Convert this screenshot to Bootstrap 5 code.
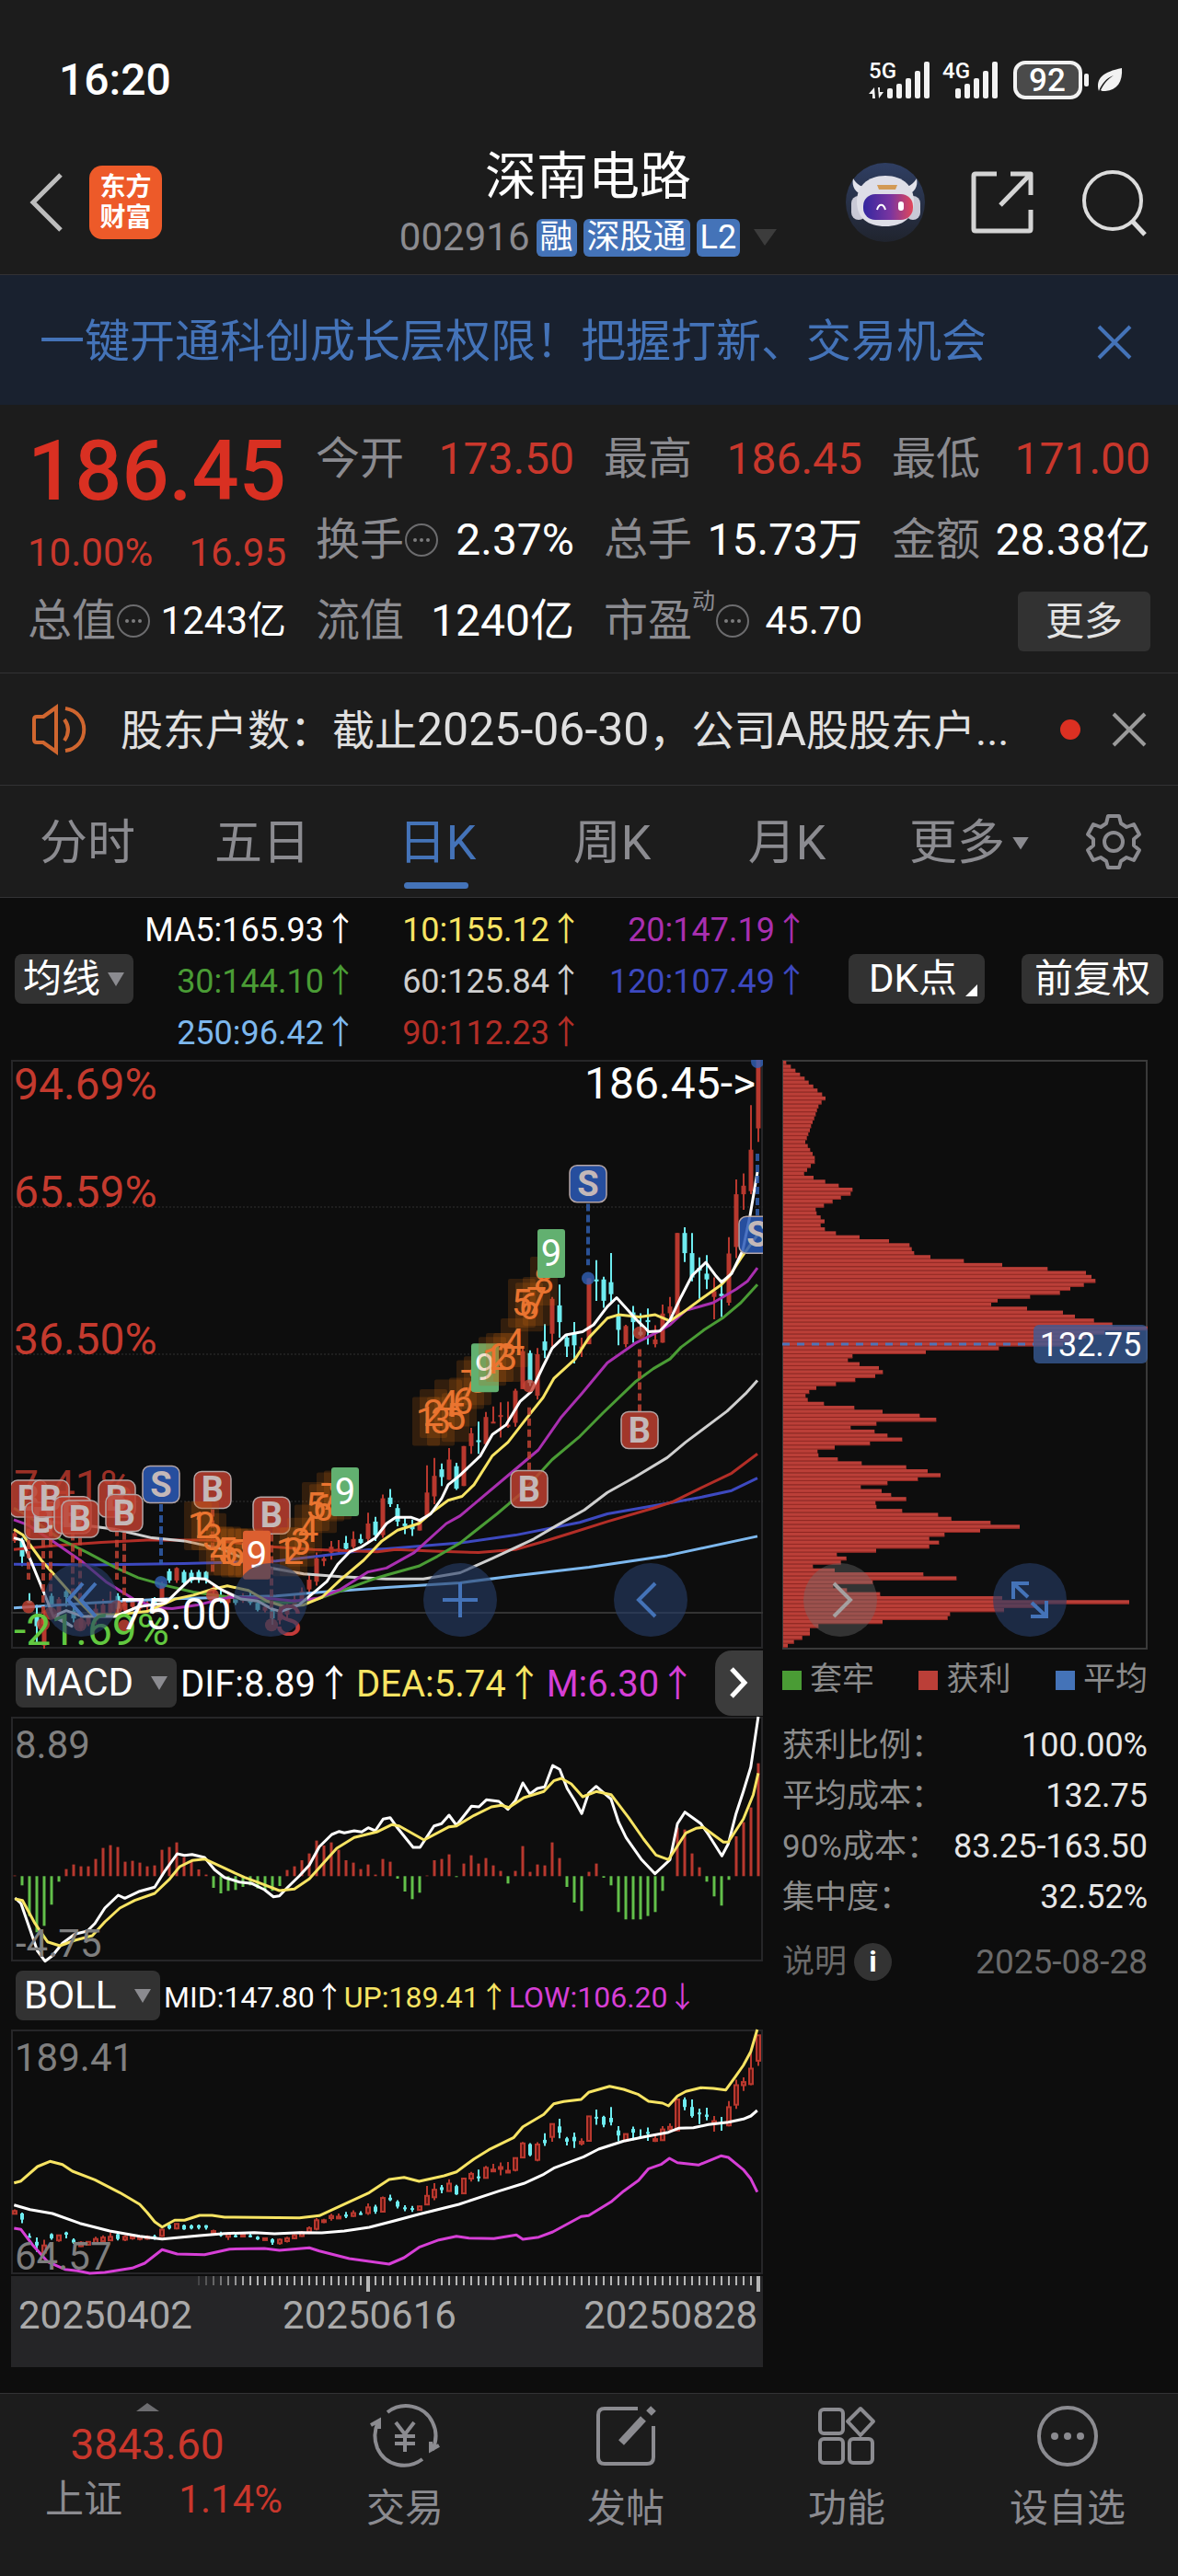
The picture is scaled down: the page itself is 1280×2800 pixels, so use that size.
<!DOCTYPE html>
<html lang="zh-CN">
<head>
<meta charset="utf-8">
<meta name="viewport" content="width=device-width, initial-scale=1">
<title>深南电路 002916</title>
<link href="https://cdn.jsdelivr.net/npm/bootstrap@5.3.0/dist/css/bootstrap.min.css" rel="stylesheet">
<style>
:root{--panel:#1c1c1c;--ink:#0d0d0d;--rule:#323234;--soft:#8b8b90;--up:#c9372c;--blue:#4473b8;--chip:#323232}
body{background:var(--ink);color:#fff;font-family:Roboto,"Liberation Sans","Noto Sans CJK SC",sans-serif;font-size:42px;line-height:1}
button,select{font-family:inherit;color:inherit;background:none;border:0;padding:0;line-height:1}
svg{display:block;flex:none;overflow:visible}
a{color:inherit;text-decoration:none}
.panel{background:var(--panel)}
.rule-b{border-bottom:1px solid var(--rule)}
.soft{color:var(--soft)}
.up{color:var(--up)}
.statusbar{padding:57px 58px 32px 64px}
.clock{font-size:48px;line-height:60px;font-weight:500}
.apphead{padding:0 34px 7px 32px;min-height:142px}
.side{flex:1 1 0}
.brand{width:79px;margin-left:27px;padding:7px 0;border-radius:14px;background:#ed5a29;font-size:28px;line-height:33px;font-weight:700;text-align:center}
.stock-name{font-size:56px;line-height:66px;margin:0;font-weight:400;padding-top:10px;box-sizing:content-box}
.code-row{height:66px;gap:7px}
.tagbox{background:var(--blue);border-radius:6px;font-size:36px;line-height:41px;padding:0 4px}
.promo{background:#19212f;color:var(--blue);font-size:49px;height:141px;line-height:137px;padding:4px 50px 0 43px}
.quote{padding:15px 30px 12px}
.quote-grid{display:grid;grid-template-columns:repeat(4,minmax(0,1fr));column-gap:32px}
.span2{grid-row:span 2}
.price{font-size:90px;line-height:116px;font-weight:500;color:#d93022;text-align:center}
.pct{line-height:60px}
.cell{height:88px}
.cell .lab{font-size:48px;color:var(--soft)}
.cell .val{font-size:48px;margin-left:auto}
.cell .val-s{font-size:42px}
.supr{font-size:25px;color:var(--soft);align-self:flex-start;padding-top:10px}
.morebtn{background:var(--chip);border-radius:6px;font-size:42px;padding:11px 30px;margin-left:auto;color:#e4e4e4;line-height:43px}
.news{padding:0 35px;height:122px;color:#e0e0e0;font-size:46px}
.news a{padding-left:36px}
.news .num{font-size:50px}
.reddot{width:22px;height:22px;border-radius:50%;background:#dc3022}
.tabs{height:122px;font-size:52px;color:var(--soft)}
.tabs a{flex:1 1 0;text-align:center;line-height:117px;height:121px;padding-top:4px;position:relative}
.tabs a.on{color:var(--blue)}
.tabs a.on::after{content:"";position:absolute;left:50%;margin-left:-36px;bottom:9px;width:70px;height:7px;border-radius:4px;background:var(--blue)}
.caret{display:inline-block;width:18px;height:14px;background:#8b8b90;clip-path:polygon(0 0,100% 0,50% 100%)}
.gearbtn{width:140px}
.mabar{padding:4px 16px}
.magrid{display:grid;grid-template-columns:237fr 245fr 245fr;grid-auto-rows:56px;flex:1;font-size:36px;line-height:54px;text-align:right}
.arw{font-family:"Noto Sans CJK SC",sans-serif}
.magrid .arw{margin-right:-6px}
.chipbtn{background:var(--chip);border-radius:8px;height:54px;font-size:42px;position:relative;display:flex;align-items:center;justify-content:center}
.pick{position:relative;background:var(--chip);border-radius:8px;height:54px}
.pick select{appearance:none;width:100%;height:54px;padding:0 0 0 9px;font-size:42px;outline:0}
.pick::after{content:"";position:absolute;right:10px;top:20px;width:18px;height:15px;background:#8b8b90;clip-path:polygon(0 0,100% 0,50% 100%);pointer-events:none}
.pick option{background:#222}
.corner{position:absolute;right:8px;bottom:8px;width:13px;height:13px;background:#fff;clip-path:polygon(100% 0,100% 100%,0 100%)}
.charts{padding:0 33px 28px 12px;gap:21px;position:relative}
.colk{flex:817 1 0;min-width:0}
.colc{flex:397 1 0;min-width:0}
.charts svg.plot{width:100%;height:auto}
.indhead{height:74px;padding-left:5px;font-size:40px;white-space:nowrap}
.indhead.tight{font-size:32px}
.nextbtn{width:52px;height:71px;border-radius:18px 0 0 18px;background:#3c3c3c;margin-left:auto}
.yel{color:#f7e463}.mag{color:#d63fd6}
.axis{background:#252527;color:#a9a9a9;height:99px;margin-top:2px}
.axis-dates{padding:4px 6px 0 8px;line-height:42px}
.mid-date{margin-right:40px}
.legend3{font-size:35px;color:#8a8a8a;height:65px}
.legend3 i{width:21px;height:21px;display:inline-block;margin-right:9px}
.stats{margin:0;line-height:55px;font-size:35px}
.stats dt{font-weight:400;color:#8b8b8b}
.stats dd{margin:0;font-size:36px;color:#e6e6e6}
.foot-note{font-size:35px;color:#6a6a6a;height:84px}
.foot-note .day{font-size:37px}
.info{width:41px;height:41px;border-radius:50%;background:#333;color:#fff;font-weight:700;font-size:32px;line-height:41px}
.round-nav{position:absolute;left:48px;right:121px;top:547px;display:flex;justify-content:space-between}
.round-nav button{width:80px;height:80px;border-radius:50%;background:rgba(38,62,104,.62);display:flex;align-items:center;justify-content:center}
.round-nav button.off{background:rgba(110,110,110,.4)}
.dock{border-top:1px solid var(--rule);min-height:199px}
.dock .idx{flex:0 0 25%;padding:10px 0 0}
.dock .idx-row{width:258px;margin-left:36px;line-height:48px}
.dock .item{flex:1 1 0;color:var(--soft);padding-top:11px}
.dock .item span{line-height:52px;padding-top:18px}
</style>
<script src="https://cdn.jsdelivr.net/npm/bootstrap@5.3.0/dist/js/bootstrap.bundle.min.js"></script>
</head>
<body>
<header class="panel rule-b">
  <div class="statusbar d-flex justify-content-between align-items-center">
    <span class="clock">16:20</span>
    <svg width="280" height="44" viewBox="943 64 280 44">
      <g fill="#fff" font-size="24" font-weight="500"><text x="945" y="84">5G</text><text x="1025" y="84">4G</text></g>
      <g fill="#f2f2f2">
        <path d="M951 94l-6 7h4v5h3zM956 106l5-7h-4v-5h-2z"/>
        <rect x="965" y="95" width="6" height="11" rx="2"/><rect x="975" y="90" width="6" height="16" rx="2"/><rect x="985" y="84" width="6" height="22" rx="2"/><rect x="995" y="76" width="6" height="30" rx="2"/><rect x="1005" y="66" width="6" height="40" rx="2"/>
        <rect x="1039" y="95" width="6" height="11" rx="2"/><rect x="1049" y="90" width="6" height="16" rx="2"/><rect x="1059" y="84" width="6" height="22" rx="2"/><rect x="1069" y="76" width="6" height="30" rx="2"/><rect x="1079" y="66" width="6" height="40" rx="2"/>
        <rect x="1179" y="79" width="5" height="14" rx="2"/>
      </g>
      <rect x="1104" y="67" width="71" height="38" rx="11" fill="#4a4a4a" stroke="#f2f2f2" stroke-width="4"/>
      <text x="1139" y="98" text-anchor="middle" font-size="35" font-weight="500" fill="#fff">92</text>
      <path d="M1195 98C1191 84 1200 77 1220 73c1 15-5 24-18 25-3 0-4 0-5-1 4-8 8-12 14-16-8 3-13 9-16 17z" fill="#f2f2f2"/>
    </svg>
  </div>
  <div class="apphead d-flex align-items-center">
    <div class="side d-flex align-items-center">
      <button aria-label="返回"><svg width="38" height="66" viewBox="0 0 38 66"><path d="M34 3L4 33l30 30" fill="none" stroke="#bdbdbd" stroke-width="5"/></svg></button>
      <div class="brand">东方<br>财富</div>
    </div>
    <div class="text-center">
      <h1 class="stock-name">深南电路</h1>
      <div class="code-row d-flex align-items-center justify-content-center">
        <span class="soft">002916</span><span class="tagbox">融</span><span class="tagbox">深股通</span><span class="tagbox">L2</span>
        <svg class="ms-2" width="25" height="18"><path d="M0 0h25L12 18z" fill="#3c3c3c"/></svg>
      </div>
    </div>
    <div class="side d-flex align-items-center justify-content-end" style="gap:50px">
      <button aria-label="助手"><svg width="86" height="86" viewBox="0 0 86 86">
        <defs><linearGradient id="visor" x1="0" x2="1"><stop offset="0" stop-color="#3327a0"/><stop offset=".55" stop-color="#7a35a0"/><stop offset="1" stop-color="#e2475a"/></linearGradient><linearGradient id="sky" x1="0" x2="0" y1="0" y2="1"><stop offset="0" stop-color="#2f3e62"/><stop offset="1" stop-color="#20242e"/></linearGradient></defs>
        <circle cx="43" cy="43" r="43" fill="url(#sky)"/>
        <path d="M8 17c-2 9 3 16 10 17l7-8c-9 1-13-3-17-9zM77 17c2 9-3 16-10 17l-7-8c9 1 13-3 17-9z" fill="#e3e3ec"/>
        <rect x="6" y="36" width="16" height="26" rx="8" fill="#c9c9d6"/><rect x="65" y="36" width="16" height="26" rx="8" fill="#c9c9d6"/>
        <path d="M43 14c20 0 31 12 31 28 0 18-12 27-31 27S12 60 12 42c0-16 11-28 31-28z" fill="#dedee7"/>
        <rect x="19" y="34" width="54" height="28" rx="13" fill="url(#visor)"/>
        <path d="M34 24h22l-2 5H36z" fill="#d39a55"/>
        <path d="M34 51c2-7 7-7 9 0" fill="none" stroke="#fff" stroke-width="2"/><rect x="57" y="42" width="6" height="10" rx="3" fill="#fff"/>
      </svg></button>
      <button aria-label="分享"><svg width="68" height="68" viewBox="0 0 68 68" fill="none" stroke="#d4d4d4" stroke-width="5" stroke-linejoin="round"><path d="M28 3H5q-2 0-2 2v58q0 2 2 2h58q2 0 2-2V42"/><path d="M43 3h22v23M65 3L32 37"/></svg></button>
      <button aria-label="搜索"><svg width="73" height="73" viewBox="0 0 73 73" fill="none" stroke="#dcdcdc" stroke-width="4"><circle cx="36" cy="34" r="31"/><path d="M58 57l13 14" stroke-width="5"/></svg></button>
    </div>
  </div>
</header>

<div class="promo d-flex justify-content-between align-items-center">
  <a href="#">一键开通科创成长层权限！把握打新、交易机会</a>
  <button aria-label="关闭"><svg width="38" height="38"><path d="M2 2l34 34M36 2L2 36" stroke="#4473b8" stroke-width="4"/></svg></button>
</div>

<section class="panel rule-b quote">
  <div class="quote-grid">
    <div class="span2">
      <div class="price">186.45</div>
      <div class="pct up d-flex justify-content-between"><span>10.00%</span><span>16.95</span></div>
    </div>
    <div class="cell d-flex align-items-center"><span class="lab">今开</span><span class="val up">173.50</span></div>
    <div class="cell d-flex align-items-center"><span class="lab">最高</span><span class="val up">186.45</span></div>
    <div class="cell d-flex align-items-center"><span class="lab">最低</span><span class="val up">171.00</span></div>
    <div class="cell d-flex align-items-center"><span class="lab">换手</span><svg width="38" height="38"><use href="#more-dots"/></svg><span class="val">2.37%</span></div>
    <div class="cell d-flex align-items-center"><span class="lab">总手</span><span class="val">15.73万</span></div>
    <div class="cell d-flex align-items-center"><span class="lab">金额</span><span class="val">28.38亿</span></div>
    <div class="cell d-flex align-items-center"><span class="lab">总值</span><svg width="38" height="38"><use href="#more-dots"/></svg><span class="val val-s">1243亿</span></div>
    <div class="cell d-flex align-items-center"><span class="lab">流值</span><span class="val">1240亿</span></div>
    <div class="cell d-flex align-items-center"><span class="lab">市盈</span><span class="supr">动</span><svg width="38" height="38"><use href="#more-dots"/></svg><span class="val val-s">45.70</span></div>
    <div class="cell d-flex align-items-center"><button class="morebtn">更多</button></div>
  </div>
</section>
<svg width="0" height="0" class="position-absolute"><symbol id="more-dots" viewBox="0 0 38 38"><circle cx="19" cy="19" r="17" fill="none" stroke="#6c6c6e" stroke-width="2"/><g fill="#7c7c7e"><circle cx="12" cy="19" r="2"/><circle cx="19" cy="19" r="2"/><circle cx="26" cy="19" r="2"/></g></symbol></svg>

<section class="panel rule-b news d-flex align-items-center">
  <svg width="60" height="52" viewBox="0 0 60 52" fill="none" stroke="#d0662f" stroke-width="4"><path d="M12 12L26 2v48L12 40H5q-3 0-3-3V15q0-3 3-3zM35 15q8 11 0 23M36 3c27 4 27 42 0 46"/></svg>
  <a href="#" class="flex-grow-1 text-nowrap">股东户数：截止<span class="num">2025-06-30</span>，公司<span class="num">A</span>股股东户...</a>
  <span class="reddot"></span>
  <button style="margin-left:35px" aria-label="关闭公告"><svg width="36" height="36"><path d="M1 1l34 34M35 1L1 35" stroke="#9a9a9a" stroke-width="4"/></svg></button>
</section>

<nav class="panel rule-b tabs d-flex align-items-center">
  <a href="#">分时</a><a href="#">五日</a><a href="#" class="on" aria-current="page">日K</a><a href="#">周K</a><a href="#">月K</a>
  <a href="#" class="d-flex align-items-center justify-content-center"><span class="ps-3">更多</span><span class="caret ms-2"></span></a>
  <button class="gearbtn d-flex justify-content-center" aria-label="设置"><svg width="62" height="62" viewBox="0 0 62 62" fill="none" stroke="#8b8b90" stroke-width="4" stroke-linejoin="round"><path d="M25 3h12l2 8 6 4 8-3 6 11-6 5v7l6 5-6 11-8-3-6 4-2 7H25l-2-7-6-4-8 3-6-11 6-5v-7l-6-5 6-11 8 3 6-4z"/><circle cx="31" cy="31" r="10"/></svg></button>
</nav>

<main>
  <section class="mabar d-flex align-items-center">
    <div class="pick" style="width:129px"><select aria-label="指标线"><option>均线</option></select></div>
    <div class="magrid">
      <span>MA5:165.93<span class="arw">↑</span></span><span style="color:#f7e463">10:155.12<span class="arw">↑</span></span><span style="color:#a92fb0">20:147.19<span class="arw">↑</span></span>
      <span style="color:#4a9c35">30:144.10<span class="arw">↑</span></span><span style="color:#cfcfcf">60:125.84<span class="arw">↑</span></span><span style="color:#3d49c0">120:107.49<span class="arw">↑</span></span>
      <span style="color:#7db8ee">250:96.42<span class="arw">↑</span></span><span style="color:#b32e27">90:112.23<span class="arw">↑</span></span>
    </div>
    <button class="chipbtn" style="width:148px;margin-left:50px"><span class="pe-2">DK点</span><span class="corner"></span></button>
    <button class="chipbtn" style="width:154px;margin-left:40px">前复权</button>
  </section>

  <section class="charts d-flex align-items-start">
    <div class="colk">
      <svg class="plot" id="kline" viewBox="12 1152 817 640" font-size="48"></svg>
      <div class="indhead d-flex align-items-center">
        <div class="pick" style="width:175px"><select aria-label="副图一"><option>MACD</option></select></div>
        <span class="ms-1">DIF:8.89<span class="arw">↑</span></span>
        <span class="yel ms-1">DEA:5.74<span class="arw">↑</span></span>
        <span class="mag ms-1">M:6.30<span class="arw">↑</span></span>
        <button class="nextbtn d-flex align-items-center justify-content-center" aria-label="下一项"><svg width="22" height="36"><path d="M3 3l14 15L3 33" fill="none" stroke="#fff" stroke-width="5"/></svg></button>
      </div>
      <svg class="plot" id="macd" viewBox="0 0 817 266" font-size="42"></svg>
      <div class="indhead tight d-flex align-items-center">
        <div class="pick" style="width:157px"><select aria-label="副图二"><option>BOLL</option></select></div>
        <span class="ms-1">MID:147.80<span class="arw">↑</span></span>
        <span class="yel">UP:189.41<span class="arw">↑</span></span>
        <span class="mag">LOW:106.20<span class="arw">↓</span></span>
      </div>
      <svg class="plot" id="boll" viewBox="0 0 817 266" font-size="42"></svg>
      <div class="axis">
        <svg class="plot" id="ticks" viewBox="0 0 817 18"></svg>
        <div class="axis-dates d-flex justify-content-between"><span>20250402</span><span class="mid-date">20250616</span><span>20250828</span></div>
      </div>
    </div>
    <div class="colc">
      <svg class="plot" id="chips" viewBox="0 0 397 641" font-size="36"></svg>
      <div class="legend3 d-flex align-items-center justify-content-between">
        <span><i style="background:#4a9c35"></i>套牢</span><span><i style="background:#bb3f38"></i>获利</span><span><i style="background:#4473b8"></i>平均</span>
      </div>
      <dl class="stats pt-2 mt-1">
        <div class="d-flex justify-content-between"><dt>获利比例：</dt><dd>100.00%</dd></div>
        <div class="d-flex justify-content-between"><dt>平均成本：</dt><dd>132.75</dd></div>
        <div class="d-flex justify-content-between text-nowrap"><dt>90%成本：</dt><dd>83.25-163.50</dd></div>
        <div class="d-flex justify-content-between"><dt>集中度：</dt><dd>32.52%</dd></div>
      </dl>
      <div class="foot-note d-flex align-items-center"><span>说明</span><button class="info ms-2" aria-label="说明">i</button><span class="day ms-auto">2025-08-28</span></div>
    </div>
    <div class="round-nav">
      <button aria-label="最早"><svg width="36" height="40" fill="none" stroke="#4473b8" stroke-width="4"><path d="M20 2L4 20l16 18M34 2L18 20l16 18"/></svg></button>
      <button aria-label="缩小"></button>
      <button aria-label="放大"><svg width="40" height="40" stroke="#4473b8" stroke-width="4"><path d="M1 20h38M20 1v38"/></svg></button>
      <button aria-label="左移"><svg width="30" height="40" fill="none" stroke="#4473b8" stroke-width="4"><path d="M20 2L2 20l18 18"/></svg></button>
      <button class="off" aria-label="右移"><svg width="26" height="40" fill="none" stroke="#a5a0a0" stroke-width="4"><path d="M6 2l18 18L6 38"/></svg></button>
      <button aria-label="全屏"><svg width="42" height="42" fill="none" stroke="#4473b8" stroke-width="4"><path d="M3 20V3h17M3 3l16 15M39 22v17H22M39 39L23 24"/></svg></button>
    </div>
  </section>
</main>

<footer class="panel dock d-flex">
  <a href="#" class="idx d-flex flex-column align-items-center">
    <svg width="25" height="9"><path d="M0 9h25L12 0z" fill="#6d6d70"/></svg>
    <span class="up" style="font-size:46px;line-height:72px">3843.60</span>
    <span class="idx-row d-flex justify-content-between align-items-center"><span class="soft">上证</span><span class="up">1.14%</span></span>
  </a>
  <a href="#" class="item d-flex flex-column align-items-center">
    <svg width="78" height="70" viewBox="0 0 78 70" fill="none" stroke="#8b8b90" stroke-width="4"><path d="M20 9C36-3 60 1 69 20c5 10 4 21 0 30M58 60C42 72 18 68 9 48 5 38 6 28 10 19M2 23l9-5v9M76 45l-9 5v-9M29 20l10 13 10-13M39 33v19M28 35h22M28 43h22"/></svg><span>交易</span></a>
  <a href="#" class="item d-flex flex-column align-items-center">
    <svg width="70" height="70" viewBox="0 0 70 70" fill="none" stroke="#8b8b90" stroke-width="4"><path d="M48 5H12q-7 0-7 7v46q0 7 7 7h46q7 0 7-7V24"/><path d="M30 42l24-26M60 10l5-5" stroke-width="8"/></svg><span>发帖</span></a>
  <a href="#" class="item d-flex flex-column align-items-center">
    <svg width="70" height="70" viewBox="0 0 70 70" fill="none" stroke="#8b8b90" stroke-width="4"><rect x="6" y="6" width="25" height="26" rx="4"/><rect x="6" y="38" width="25" height="26" rx="4"/><rect x="38" y="38" width="25" height="26" rx="4"/><path d="M50 5l14 14-14 15-14-15z" stroke-linejoin="round"/></svg><span>功能</span></a>
  <a href="#" class="item d-flex flex-column align-items-center">
    <svg width="70" height="70" viewBox="0 0 70 70"><circle cx="35" cy="35" r="31" fill="none" stroke="#8b8b90" stroke-width="4"/><g fill="#8b8b90"><circle cx="21" cy="35" r="4"/><circle cx="35" cy="35" r="4"/><circle cx="49" cy="35" r="4"/></g></svg><span>设自选</span></a>
</footer>

<script>
const RED='#b8382e',CY='#6eecf0';
// K-line levels: 28 is the top of the plot (94.69%), 1548 the bottom (-21.69%)
const ky=v=>+(1152+(v-28)*640/1520).toFixed(1);
const line=(pts,c,fx,fy,w)=>`<polyline fill="none" stroke="${c}" stroke-width="${w||3}" stroke-linejoin="round" points="${pts.trim().split(' ').map(p=>{const[a,b]=p.split(',');return fx(+a).toFixed(1)+','+fy(+b).toFixed(1)}).join(' ')}"/>`;
// high, body top, body bottom, low; a leading minus marks a falling day
const days=`1240,1250,1270,1275 -1262,1268,1310,1335 -1405,1425,1430,1430 -1435,1465,1490,1535 1450,1490,1540,1550 -1405,1412,1440,1450 1415,1420,1455,1465 -1395,1400,1415,1440 -1440,1450,1470,1480 1460,1470,1495,1500 1460,1465,1485,1490 1430,1445,1475,1485 1420,1435,1460,1465 1400,1430,1455,1460 -1405,1412,1445,1455 1420,1430,1450,1460 1415,1425,1440,1450 1425,1430,1445,1455 1420,1430,1440,1450 -1415,1425,1435,1450 1375,1380,1425,1430 -1342,1348,1372,1378 1338,1340,1372,1378 -1345,1350,1378,1382 -1345,1352,1372,1378 -1345,1350,1368,1378 -1348,1350,1368,1380 1380,1390,1400,1420 -1395,1410,1420,1430 1400,1410,1430,1452 -1410,1420,1430,1435 1405,1415,1425,1430 -1400,1420,1430,1435 -1425,1430,1448,1452 1435,1440,1450,1455 -1440,1448,1470,1486 1440,1450,1475,1485 1430,1440,1460,1470 1410,1420,1440,1445 1390,1400,1425,1430 1358,1370,1395,1410 1300,1315,1375,1385 1305,1315,1322,1335 1270,1285,1300,1318 1268,1290,1296,1300 -1257,1275,1290,1300 1245,1265,1285,1290 -1252,1265,1275,1278 1197,1225,1265,1278 -1208,1220,1255,1270 1150,1160,1255,1262 -1136,1158,1175,1182 -1175,1185,1220,1232 -1210,1225,1232,1252 -1215,1230,1240,1257 1215,1218,1243,1243 1075,1145,1205,1210 1056,1102,1155,1175 -1070,1085,1105,1128 1030,1060,1112,1112 -1068,1077,1135,1138 1025,1025,1128,1128 978,992,1025,1045 -962,1010,1014,1045 937,950,1020,1025 923,962,966,966 912,945,950,1003 910,970,975,978 877,882,965,975 770,780,878,878 -778,785,862,870 772,788,895,905 -710,755,778,798 640,645,735,768 -608,662,705,745 -735,745,768,795 -705,735,765,812 745,768,774,795 592,592,762,762 -545,595,600,650 -588,595,650,668 -527,602,633,655 -660,690,725,765 712,715,762,770 -663,680,705,758 -682,730,738,742 -670,700,705,763 713,750,762,770 660,683,758,758 640,665,682,700 475,475,690,690 -460,475,527,550 -475,527,590,600 -538,565,572,645 -532,580,595,620 590,625,640,698 -595,632,638,692 486,528,655,662 337,375,511,540 321,353,375,415 145,260,367,375 28,28,205,240`.split(' ').map(s=>{const a=s.split(',').map(Number);return{up:a[0]>0,v:[Math.abs(a[0]),a[1],a[2],a[3]]}});
const id=x=>x;
let s='<clipPath id="inplot"><rect x="12" y="1152" width="817" height="640"/></clipPath><rect x="13" y="1153" width="815" height="638" fill="none" stroke="#262628" stroke-width="2"/>';
[1312,1472,1632].forEach(y=>s+=`<path d="M12 ${y}H829" stroke="#333" stroke-dasharray="2 2"/>`);
s+='<path d="M12 1753H829" stroke="#333" stroke-width="2"/>';
s+='<g fill="#c43a2e"><text x="15" y="1195">94.69%</text><text x="15" y="1312">65.59%</text><text x="15" y="1472">36.50%</text><text x="15" y="1632" fill-opacity=".8">7.41%</text></g><g clip-path="url(#inplot)">';
days.forEach((d,i)=>{const x=16+8*i,[h,t,b,l]=d.v.map(ky),c=d.up?RED:CY;
 s+=`<path d="M${x} ${h}V${l}" stroke="${c}" stroke-width="2"/><rect x="${x-2.5}" y="${t}" width="5" height="${Math.max(2,b-t)}" fill="${c}"/>`});
const ma={
'#7db8ee':'15,1443 100,1430 180,1420 300,1412 350,1402 420,1390 500,1378 560,1360 640,1338 725,1308 823,1258',
'#3d49c0':'15,1330 100,1332 200,1328 300,1322 350,1308 400,1293 420,1290 500,1275 560,1255 630,1222 660,1200 720,1175 760,1158 795,1140 823,1108',
'#b32e27':'15,1292 60,1282 110,1274 160,1268 230,1268 295,1285 340,1292 410,1298 430,1292 470,1296 520,1300 560,1292 590,1272 620,1250 660,1220 710,1185 730,1170 760,1135 795,1095 823,1045',
'#cfcfcf':'55,1220 100,1232 125,1240 165,1262 200,1270 240,1290 270,1320 295,1340 330,1355 370,1362 420,1368 460,1368 500,1352 535,1315 580,1265 605,1230 635,1190 660,1145 690,1105 725,1055 745,1015 790,935 810,890 823,856',
'#4a9c35':'15,1185 30,1205 65,1265 95,1300 125,1338 150,1365 180,1385 210,1402 240,1412 280,1425 310,1430 345,1420 375,1395 410,1365 420,1358 455,1335 475,1310 500,1275 540,1200 565,1150 600,1060 630,1000 655,940 690,860 710,825 728,800 740,770 765,725 785,695 805,655 823,608',
'#a92fb0':'15,1215 30,1228 60,1275 90,1325 115,1375 145,1420 170,1442 187,1445 215,1435 250,1415 290,1418 320,1425 345,1418 370,1395 400,1350 420,1340 450,1300 485,1225 500,1205 550,1105 585,1035 610,950 632,890 660,810 690,760 715,730 728,712 745,675 775,655 800,620 812,600 823,565',
'#f7e463':'15,1240 25,1255 45,1320 75,1400 100,1460 125,1460 160,1452 190,1420 210,1410 230,1395 247,1386 270,1398 290,1425 310,1440 330,1435 350,1415 370,1370 395,1320 415,1270 432,1242 455,1225 470,1195 487,1165 502,1155 515,1125 535,1050 552,1015 570,960 590,900 602,850 625,800 640,745 660,695 672,686 695,692 712,686 728,702 745,675 765,640 783,610 793,585 805,540 823,480',
'#ffffff':'15,1262 24,1268 35,1330 48,1405 58,1465 78,1490 60,1462 72,1450 90,1465 125,1465 150,1440 180,1430 195,1395 208,1366 223,1368 240,1395 262,1420 280,1425 295,1445 305,1452 325,1435 340,1405 355,1375 367,1330 380,1298 393,1285 408,1262 420,1225 430,1209 447,1209 456,1217 468,1200 480,1160 487,1125 500,1100 522,1050 535,995 550,970 565,910 577,885 590,820 600,772 615,738 633,730 645,712 660,665 670,642 680,668 692,700 705,730 717,728 728,700 740,640 752,585 767,551 777,583 784,602 795,580 807,520 815,430 823,318'};
for(const c in ma)s+=line(ma[c],c,id,ky);
// trade signals: x, badge level, dash start, dash end, dot level, letter
[[31,1161,1210,1370,1440,'B'],[47,1218,1268,1485,1485,'B'],[55,1161,1210,1400,1457,'B'],[79,1203,1250,1420,0,'B'],[87,1213,1262,1420,1487,'B'],[127,1161,1210,1370,1440,'B'],[135,1198,1248,1440,1490,'B'],[175,1124,1175,1330,1377,'S'],[231,1138,1188,1350,1410,'B'],[295,1204,1252,1470,1487,'B'],[575,1136,925,1087,870,'B'],[695,984,775,935,733,'B'],[639,348,400,558,592,'S'],[823,480,270,430,33,'S']].forEach(([x,b,a,e,d,t])=>{
 const c=t=='B'?'#c64434':'#3262b8',y=ky(b);
 s+=`<path d="M${x} ${ky(a)}V${ky(e)}" stroke="${c}" stroke-width="4" stroke-dasharray="8 4" opacity=".8"/>`;
 if(d)s+=`<circle cx="${x}" cy="${ky(d)}" r="7" fill="${c}" opacity=".8"/>`;
 s+=`<rect x="${x-20}" y="${y-20}" width="40" height="40" rx="8" fill="${t=='B'?'#bd4030':'#2b5bb8'}" fill-opacity=".85" stroke="#b5a5a5" stroke-width="1.5"/><text x="${x}" y="${y+13}" text-anchor="middle" font-size="38" font-weight="700" fill="#c4b8b8">${t}</text>`});
s+='</g>';
// nine-turn counts
[[215,'1230,1230,1260,1295,1295,1300,1300,1300',1305,'#dc5f30'],[311,'1297,1297,1272,1238,1180,1185,1155,1150',1142,'#62b070'],[463,'960,940,960,915,950,910,865,855',822,'#62b070'],[535,'805,795,795,757,655,665,650,598',527,'#62b070']].forEach(([x0,ys,e,c])=>{
 const a=ys.split(',').map(Number);
 a.forEach((v,i)=>s+=`<rect x="${x0+8*i-15}" y="${ky(v)-26}" width="30" height="53" rx="2" fill="#c8640f" fill-opacity=".2"/>`);
 a.forEach((v,i)=>s+=`<text x="${x0+8*i}" y="${ky(v)+14}" text-anchor="middle" font-size="40" fill="#ea7430">${i+1}</text>`);
 s+=`<rect x="${x0+49}" y="${ky(e)-26}" width="30" height="53" rx="3" fill="${c}"/><text x="${x0+64}" y="${ky(e)+14}" text-anchor="middle" font-size="40" fill="#fff">9</text>`});
s+='<text x="15" y="1788" fill="#62c840">-21.69%</text><text x="131" y="1771" fill="#fff">75.00</text><text x="299" y="1778" fill="#c23b3b">S</text><text x="821" y="1194" text-anchor="end" fill="#fff">186.45-&gt;</text>';
kline.innerHTML=s;

// MACD
const mx=x=>(x-22)/1.845,my=y=>(y-256)/3;
s='<rect x="1" y="1" width="815" height="264" fill="none" stroke="#262628" stroke-width="2"/><g fill="#7f7f7f"><text x="4" y="45">8.89</text></g>';
const frame=s;
'2,-30,-130,-183,-162,-93,-18,23,38,32,32,56,92,101,95,47,50,44,32,35,86,95,110,62,50,22,5,-38,-56,-48,-45,-35,-30,-40,-45,-48,-32,20,32,52,74,116,100,110,86,52,44,23,38,5,56,47,-8,-50,-75,-54,2,52,56,71,-3,41,68,41,59,35,17,-24,17,98,14,38,35,110,59,-35,-86,-114,14,41,-5,-30,-117,-141,-141,-141,-130,-117,-48,0,158,152,74,29,-18,-66,-96,-12,130,176,224,368'.split(',').forEach((v,i)=>{
 s+=`<path d="M${4+8*i} 173.3V${(173.3-v/3).toFixed(1)}" stroke="${v>0?'#b8382e':'#62c04a'}" stroke-width="3"/>`});
s+=line('30,847 42,865 60,950 75,1020 90,1053 105,1035 125,995 150,965 175,955 190,930 210,880 237,838 250,848 280,825 310,812 330,760 355,703 370,708 385,705 410,715 430,755 450,780 480,795 505,800 530,820 548,843 560,840 575,815 600,775 620,740 640,680 665,640 680,630 690,635 710,628 725,632 738,618 752,628 768,590 782,585 795,615 828,682 842,682 870,612 885,605 900,577 915,610 945,548 960,550 975,527 1000,532 1018,558 1033,530 1048,472 1062,508 1077,490 1092,485 1108,415 1122,428 1137,490 1152,530 1166,572 1180,505 1195,483 1225,525 1240,600 1255,650 1285,720 1313,768 1343,722 1358,605 1373,567 1405,605 1420,640 1447,710 1460,670 1475,575 1490,500 1505,420 1520,256','#fff',mx,my);
s+=line('30,850 45,855 70,930 95,990 120,1003 150,985 185,970 210,925 240,880 270,855 310,832 340,785 360,745 385,725 410,720 450,750 490,780 520,798 560,823 590,818 620,785 650,730 675,685 710,650 755,632 785,608 800,612 850,658 900,615 915,612 950,578 985,550 1005,545 1020,552 1050,520 1090,500 1110,465 1125,457 1145,475 1168,517 1195,500 1225,510 1260,585 1290,655 1315,707 1340,722 1355,685 1375,635 1395,620 1410,617 1450,665 1460,665 1490,590 1510,510 1520,440','#f7e463',mx,my);
s+='<text x="5" y="261" fill="#7f7f7f">-4.75</text>';
macd.innerHTML=s;

// BOLL
const by=y=>(y-198)/3,kb=v=>+(6.3+(v-28)*640/1520*.371).toFixed(1);
s=frame.replace('8.89','189.41');
days.forEach((d,i)=>{const x=4+8*i,[h,t,b,l]=d.v.map(kb);
 s+=`<path d="M${x} ${h}V${l}" stroke="${d.up?RED:CY}" stroke-width="2"/>`+(d.up?`<rect x="${x-2}" y="${t}" width="4" height="${Math.max(2,b-t)}" fill="#5a1512" stroke="${RED}" stroke-width="2"/>`:`<rect x="${x-2}" y="${t}" width="4" height="${Math.max(2,b-t)}" fill="${CY}"/>`)});
s+=line('28,698 42,692 75,645 100,628 125,638 145,660 190,688 240,730 280,768 295,795 310,825 325,842 350,820 370,820 400,804 425,804 450,810 600,812 640,805 680,775 740,730 780,687 810,680 840,693 890,675 915,662 950,620 980,590 1030,550 1048,515 1090,475 1110,440 1130,433 1165,426 1180,403 1222,383 1250,393 1280,410 1300,432 1328,438 1340,447 1358,415 1375,400 1405,388 1430,390 1455,395 1475,350 1490,315 1505,270 1518,198','#f7e463',mx,by);
s+=line('28,770 60,785 105,798 160,830 220,855 280,872 325,881 400,870 450,863 510,860 550,864 600,860 645,861 690,855 740,843 790,822 840,800 920,768 1000,725 1050,700 1090,670 1110,650 1170,613 1200,588 1250,562 1300,545 1340,533 1360,520 1390,518 1420,508 1460,500 1490,490 1505,480 1518,462','#fff',mx,by);
s+=line('28,846 42,850 65,900 95,955 130,980 155,985 180,993 210,990 265,976 290,960 325,916 355,930 410,932 460,914 530,912 560,918 620,910 640,920 700,945 780,963 810,942 840,908 880,884 915,872 940,878 990,880 1035,868 1048,882 1080,875 1108,858 1165,808 1180,805 1225,760 1250,725 1280,690 1300,652 1325,638 1342,618 1358,632 1400,640 1445,610 1460,615 1490,655 1505,685 1518,728','#d63fd6',mx,by);
s+='<text x="4" y="261" fill="#7f7f7f">64.57</text>';
boll.innerHTML=s;

// date ruler
s='';
for(let i=25;i<102;i++){const m=i==48||i==101;s+=`<path d="M${4+8*i} 0V${m?17:10}" stroke="#b5b5b5" stroke-width="${m?4:2}" opacity="${Math.min(1,(i-23)/9)}"/>`}
ticks.innerHTML=s;

// chip distribution, top price to bottom price
const w='72,87,102,117,132,145,160,174,189,200,187,177,172,168,163,158,153,149,144,139,134,142,150,158,165,165,152,140,130,161,199,243,288,282,250,223,195,168,171,184,197,184,198,234,311,407,474,481,489,542,651,776,924,1049,1067,1080,1042,998,964,867,761,740,857,974,1013,1075,1135,1250,1110,1050,1010,975,765,527,288,273,311,374,387,362,297,234,170,147,135,142,195,294,386,507,561,366,282,360,402,450,345,230,174,177,240,318,463,533,575,501,402,315,383,414,463,363,366,450,567,610,738,833,704,588,538,570,538,365,237,268,250,159,230,519,627,354,225,270,378,776,1190,890,782,606,598,386,177,149,149,124,97,77'.split(',');
const ph=638/w.length;
s='<rect x="1" y="1" width="395" height="639" fill="none" stroke="#3a3a3a" stroke-width="2"/>';
w.forEach((v,i)=>{const y=1+i*ph,ww=(v-62)/3;s+=`<rect x="1" y="${y.toFixed(2)}" width="${ww.toFixed(1)}" height="${ph.toFixed(2)}" fill="#bb3f38"/><rect x="1" y="${(y+ph-1).toFixed(2)}" width="${ww.toFixed(1)}" height="1" fill="#8e2722"/>`});
s+='<path d="M0 309H273" stroke="#4f74b8" stroke-width="3" stroke-dasharray="8 8"/><rect x="273" y="288" width="124" height="42" rx="6" fill="#3a5f9c" fill-opacity=".75"/><text x="335" y="322" text-anchor="middle" fill="#fff">132.75</text>';
chips.innerHTML=s;
</script>
</body>
</html>
